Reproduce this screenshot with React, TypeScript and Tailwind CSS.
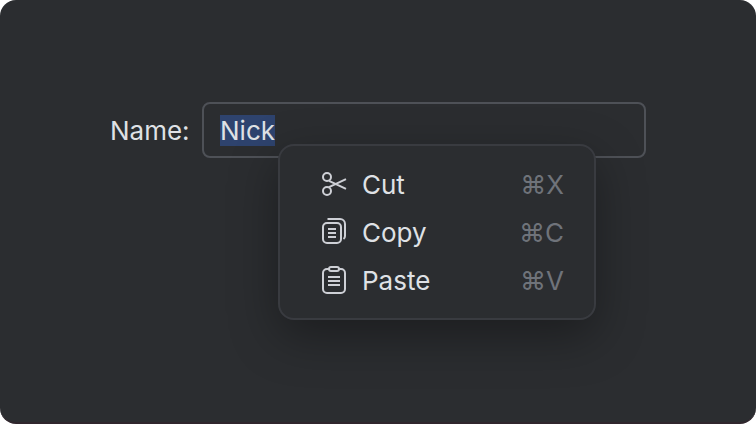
import { useEffect, useRef } from "react";
import type { ReactNode } from "react";

function CutIcon() {
  return (
    <>
      <circle cx="7" cy="7" r="4" />
      <circle cx="7" cy="21" r="4" />
      <path d="M9 10.8 26 18.8M9 17.2 26 9.2" />
    </>
  );
}

function CopyIcon() {
  return (
    <>
      <rect x="3" y="5" width="18" height="20" rx="4" />
      <path d="M7.5 1H20a5 5 0 0 1 5 5v12c0 1.3-.5 2.3-1.5 3" />
      <path d="M8 11h8M8 15h8M8 19h8" />
    </>
  );
}

function PasteIcon() {
  return (
    <>
      <path d="M9 3H7a4 4 0 0 0-4 4v16a4 4 0 0 0 4 4h14a4 4 0 0 0 4-4V7a4 4 0 0 0-4-4h-2" />
      <rect x="9" y="1" width="10" height="4" rx="2" />
      <path d="M8 11h12M8 15h12M8 19h12" />
    </>
  );
}

function MenuItem({ label, shortcut, children }: { label: string; shortcut: string; children: ReactNode }) {
  return (
    <button type="button" role="menuitem" className="flex h-12 w-full items-center gap-3.5 px-10 pr-[30px] text-left">
      <svg aria-hidden="true" viewBox="0 0 28 28" className="size-7 shrink-0" fill="none" stroke="#ced0d6" strokeWidth="2">
        {children}
      </svg>
      <span className="flex-1 pt-0.5">{label}</span>
      <span className="pt-0.5 text-[#6f737a]">{shortcut}</span>
    </button>
  );
}

export default function App() {
  const field = useRef<HTMLInputElement>(null);

  useEffect(() => {
    field.current?.focus();
    field.current?.select();
  }, []);

  return (
    <div className="bg-white font-['Inter',sans-serif] text-[26px] leading-8 text-[#dfe1e5]">
      <main className="min-h-screen rounded-2xl border-b-2 border-[#30262d] bg-[#2b2d30] px-8 pt-[102px]">
        <div className="mx-auto flex max-w-[536px] items-center">
          <label htmlFor="name" className="w-[92px] shrink-0 pt-0.5">
            Name:
          </label>
          <div className="relative min-w-0 flex-1">
            <input
              id="name"
              ref={field}
              type="text"
              defaultValue="Nick"
              className="block h-14 w-full rounded-lg border-2 border-[#4e5157] bg-transparent px-4 py-2 outline-none selection:bg-[#2e436e] selection:text-[#dfe1e5]"
            />
            <div
              role="menu"
              className="absolute top-[42px] right-[50px] w-[318px] rounded-2xl border-2 border-[#393b40] bg-[#2b2d30] py-3.5 shadow-[0_16px_48px_rgba(0,0,0,0.35)]"
            >
              <MenuItem label="Cut" shortcut="⌘X"><CutIcon /></MenuItem>
              <MenuItem label="Copy" shortcut="⌘C"><CopyIcon /></MenuItem>
              <MenuItem label="Paste" shortcut="⌘V"><PasteIcon /></MenuItem>
            </div>
          </div>
        </div>
      </main>
    </div>
  );
}
